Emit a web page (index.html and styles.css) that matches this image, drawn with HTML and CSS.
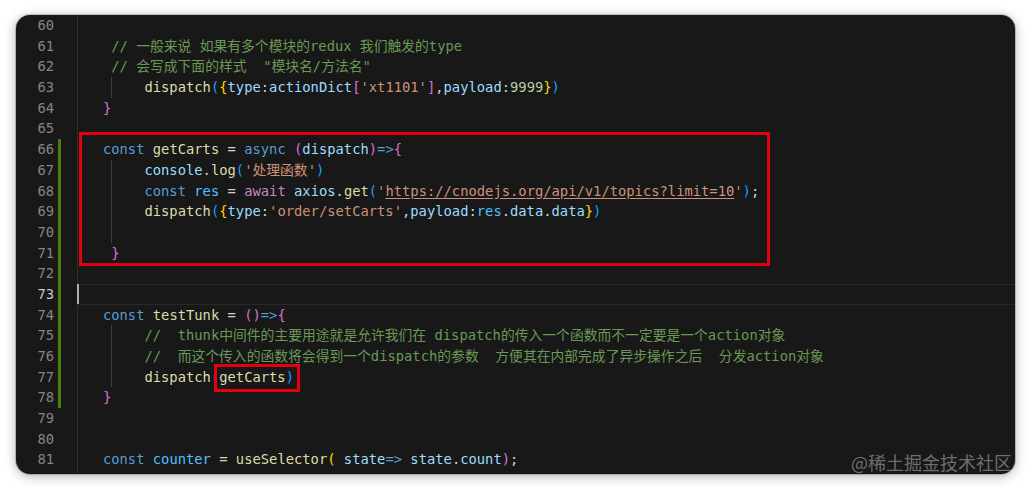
FILE: index.html
```html
<!DOCTYPE html>
<html lang="zh-CN">
<head>
<meta charset="utf-8">
<title>editor</title>
<link rel="stylesheet" href="styles.css">
</head>
<body>
<div class="window">
  <div class="gutter">
    <div class="ln"><span class="num">60</span><span class="bar"></span></div>
    <div class="ln"><span class="num">61</span><span class="bar"></span></div>
    <div class="ln"><span class="num">62</span><span class="bar"></span></div>
    <div class="ln"><span class="num">63</span><span class="bar"></span></div>
    <div class="ln"><span class="num">64</span><span class="bar"></span></div>
    <div class="ln"><span class="num">65</span><span class="bar"></span></div>
    <div class="ln mod"><span class="num">66</span><span class="bar"></span></div>
    <div class="ln mod"><span class="num">67</span><span class="bar"></span></div>
    <div class="ln mod"><span class="num">68</span><span class="bar"></span></div>
    <div class="ln mod"><span class="num">69</span><span class="bar"></span></div>
    <div class="ln mod"><span class="num">70</span><span class="bar"></span></div>
    <div class="ln mod"><span class="num">71</span><span class="bar"></span></div>
    <div class="ln mod"><span class="num">72</span><span class="bar"></span></div>
    <div class="ln mod active"><span class="num">73</span><span class="bar"></span></div>
    <div class="ln mod"><span class="num">74</span><span class="bar"></span></div>
    <div class="ln mod"><span class="num">75</span><span class="bar"></span></div>
    <div class="ln mod"><span class="num">76</span><span class="bar"></span></div>
    <div class="ln mod"><span class="num">77</span><span class="bar"></span></div>
    <div class="ln mod"><span class="num">78</span><span class="bar"></span></div>
    <div class="ln"><span class="num">79</span><span class="bar"></span></div>
    <div class="ln"><span class="num">80</span><span class="bar"></span></div>
    <div class="ln"><span class="num">81</span><span class="bar"></span></div>
  </div>
  <div class="code">
    <div class="line"></div>
    <div class="line">    <span class="cm">// 一般来说 如果有多个模块的redux 我们触发的type</span></div>
    <div class="line">    <span class="cm">// 会写成下面的样式  "模块名/方法名"</span></div>
    <div class="line guide">        <span class="f">dispatch</span><span class="b3">(</span><span class="b1">{</span><span class="v">type</span>:<span class="v">actionDict</span><span class="b2">[</span><span class="s">'xt1101'</span><span class="b2">]</span>,<span class="v">payload</span>:<span class="n">9999</span><span class="b1">}</span><span class="b3">)</span></div>
    <div class="line">   <span class="b2">}</span></div>
    <div class="line"></div>
    <div class="line">   <span class="k">const</span> <span class="f">getCarts</span> = <span class="k">async</span> <span class="b2">(</span><span class="v">dispatch</span><span class="b2">)</span><span class="k">=&gt;</span><span class="b2">{</span></div>
    <div class="line guide">        <span class="v">console</span>.<span class="f">log</span><span class="b3">(</span><span class="s">'处理函数'</span><span class="b3">)</span></div>
    <div class="line guide">        <span class="k">const</span> <span class="c">res</span> = <span class="aw">await</span> <span class="v">axios</span>.<span class="f">get</span><span class="b3">(</span><span class="s">'<span class="url">https://cnodejs.org/api/v1/topics?limit=10</span>'</span><span class="b3">)</span>;</div>
    <div class="line guide">        <span class="f">dispatch</span><span class="b3">(</span><span class="b1">{</span><span class="v">type</span>:<span class="s">'order/setCarts'</span>,<span class="v">payload</span>:<span class="c">res</span>.<span class="v">data</span>.<span class="v">data</span><span class="b1">}</span><span class="b3">)</span></div>
    <div class="line guide"></div>
    <div class="line">    <span class="b2">}</span></div>
    <div class="line"></div>
    <div class="line current"><span class="cursor"></span></div>
    <div class="line">   <span class="k">const</span> <span class="f">testTunk</span> = <span class="b2">()</span><span class="k">=&gt;</span><span class="b2">{</span></div>
    <div class="line guide">        <span class="cm">//  thunk中间件的主要用途就是允许我们在 dispatch的传入一个函数而不一定要是一个action对象</span></div>
    <div class="line guide">        <span class="cm">//  而这个传入的函数将会得到一个dispatch的参数  方便其在内部完成了异步操作之后  分发action对象</span></div>
    <div class="line guide">        <span class="f">dispatch</span><span class="b3">(</span><span class="f">getCarts</span><span class="b3">)</span></div>
    <div class="line">   <span class="b2">}</span></div>
    <div class="line"></div>
    <div class="line"></div>
    <div class="line">   <span class="k">const</span> <span class="c">counter</span> = <span class="f">useSelector</span><span class="b1">(</span> <span class="v">state</span><span class="k">=&gt;</span> <span class="v">state</span>.<span class="v">count</span><span class="b2">)</span>;</div>
  </div>
  <div class="mark mark-fn"></div>
  <div class="mark mark-arg"></div>
  <div class="watermark">@稀土掘金技术社区</div>
</div>
</body>
</html>
```
FILE: styles.css
```css
html, body {
  margin: 0;
  padding: 0;
  background: #ffffff;
}

body {
  padding: 15px 16px;
}

.window {
  position: relative;
  display: flex;
  width: 999px;
  height: 459px;
  background: #181818;
  border-radius: 14px;
  overflow: hidden;
  box-shadow: 0 0 0 1px rgba(0, 0, 0, 0.18), 0 2px 12px rgba(0, 0, 0, 0.32);
  font-family: "DejaVu Sans Mono", "Noto Sans CJK SC", monospace;
  font-size: 13.8px;
  color: #d4d4d4;
}

.gutter {
  width: 61px;
  flex: none;
}

.ln {
  display: flex;
  height: 20.7px;
  line-height: 20.7px;
}

.num {
  width: 38px;
  text-align: right;
  color: #858585;
}

.active .num {
  color: #c6c6c6;
}

.bar {
  width: 3px;
  margin-left: 4px;
}

.mod .bar {
  background: #487e02;
}

.code {
  flex: 1;
  border-left: 1px solid #2c2c2c;
}

.line {
  height: 20.7px;
  line-height: 20.7px;
  white-space: pre;
  font-family: "DejaVu Sans Mono", "Noto Sans CJK SC", monospace;
}

.guide {
  background: linear-gradient(#3e3e3e, #3e3e3e) no-repeat 33px 0 / 1px 100%;
}

.current {
  box-shadow: inset 0 1px #282828, inset 0 -1px #282828;
}

.cursor {
  display: inline-block;
  width: 2px;
  height: 20px;
  margin-left: -1px;
  vertical-align: top;
  background: #aeafad;
}

.k { color: #569cd6; }
.f { color: #dcdcaa; }
.v { color: #9cdcfe; }
.c { color: #4fc1ff; }
.s { color: #ce9178; }
.n { color: #b5cea8; }
.cm { color: #6a9955; }
.aw { color: #c586c0; }
.b1 { color: #ffd700; }
.b2 { color: #da70d6; }
.b3 { color: #179fff; }

.url {
  text-decoration: underline;
  text-underline-offset: 2px;
}

.mark {
  position: absolute;
  border: 3px solid #e3000e;
  box-sizing: border-box;
}

.mark-fn {
  left: 63px;
  top: 117px;
  width: 691px;
  height: 134px;
}

.mark-arg {
  left: 198px;
  top: 349px;
  width: 86px;
  height: 28px;
}

.watermark {
  position: absolute;
  right: 3px;
  bottom: 3px;
  font-family: "Noto Sans CJK SC", sans-serif;
  font-size: 18px;
  line-height: 18px;
  color: rgba(255, 255, 255, 0.38);
}
```
